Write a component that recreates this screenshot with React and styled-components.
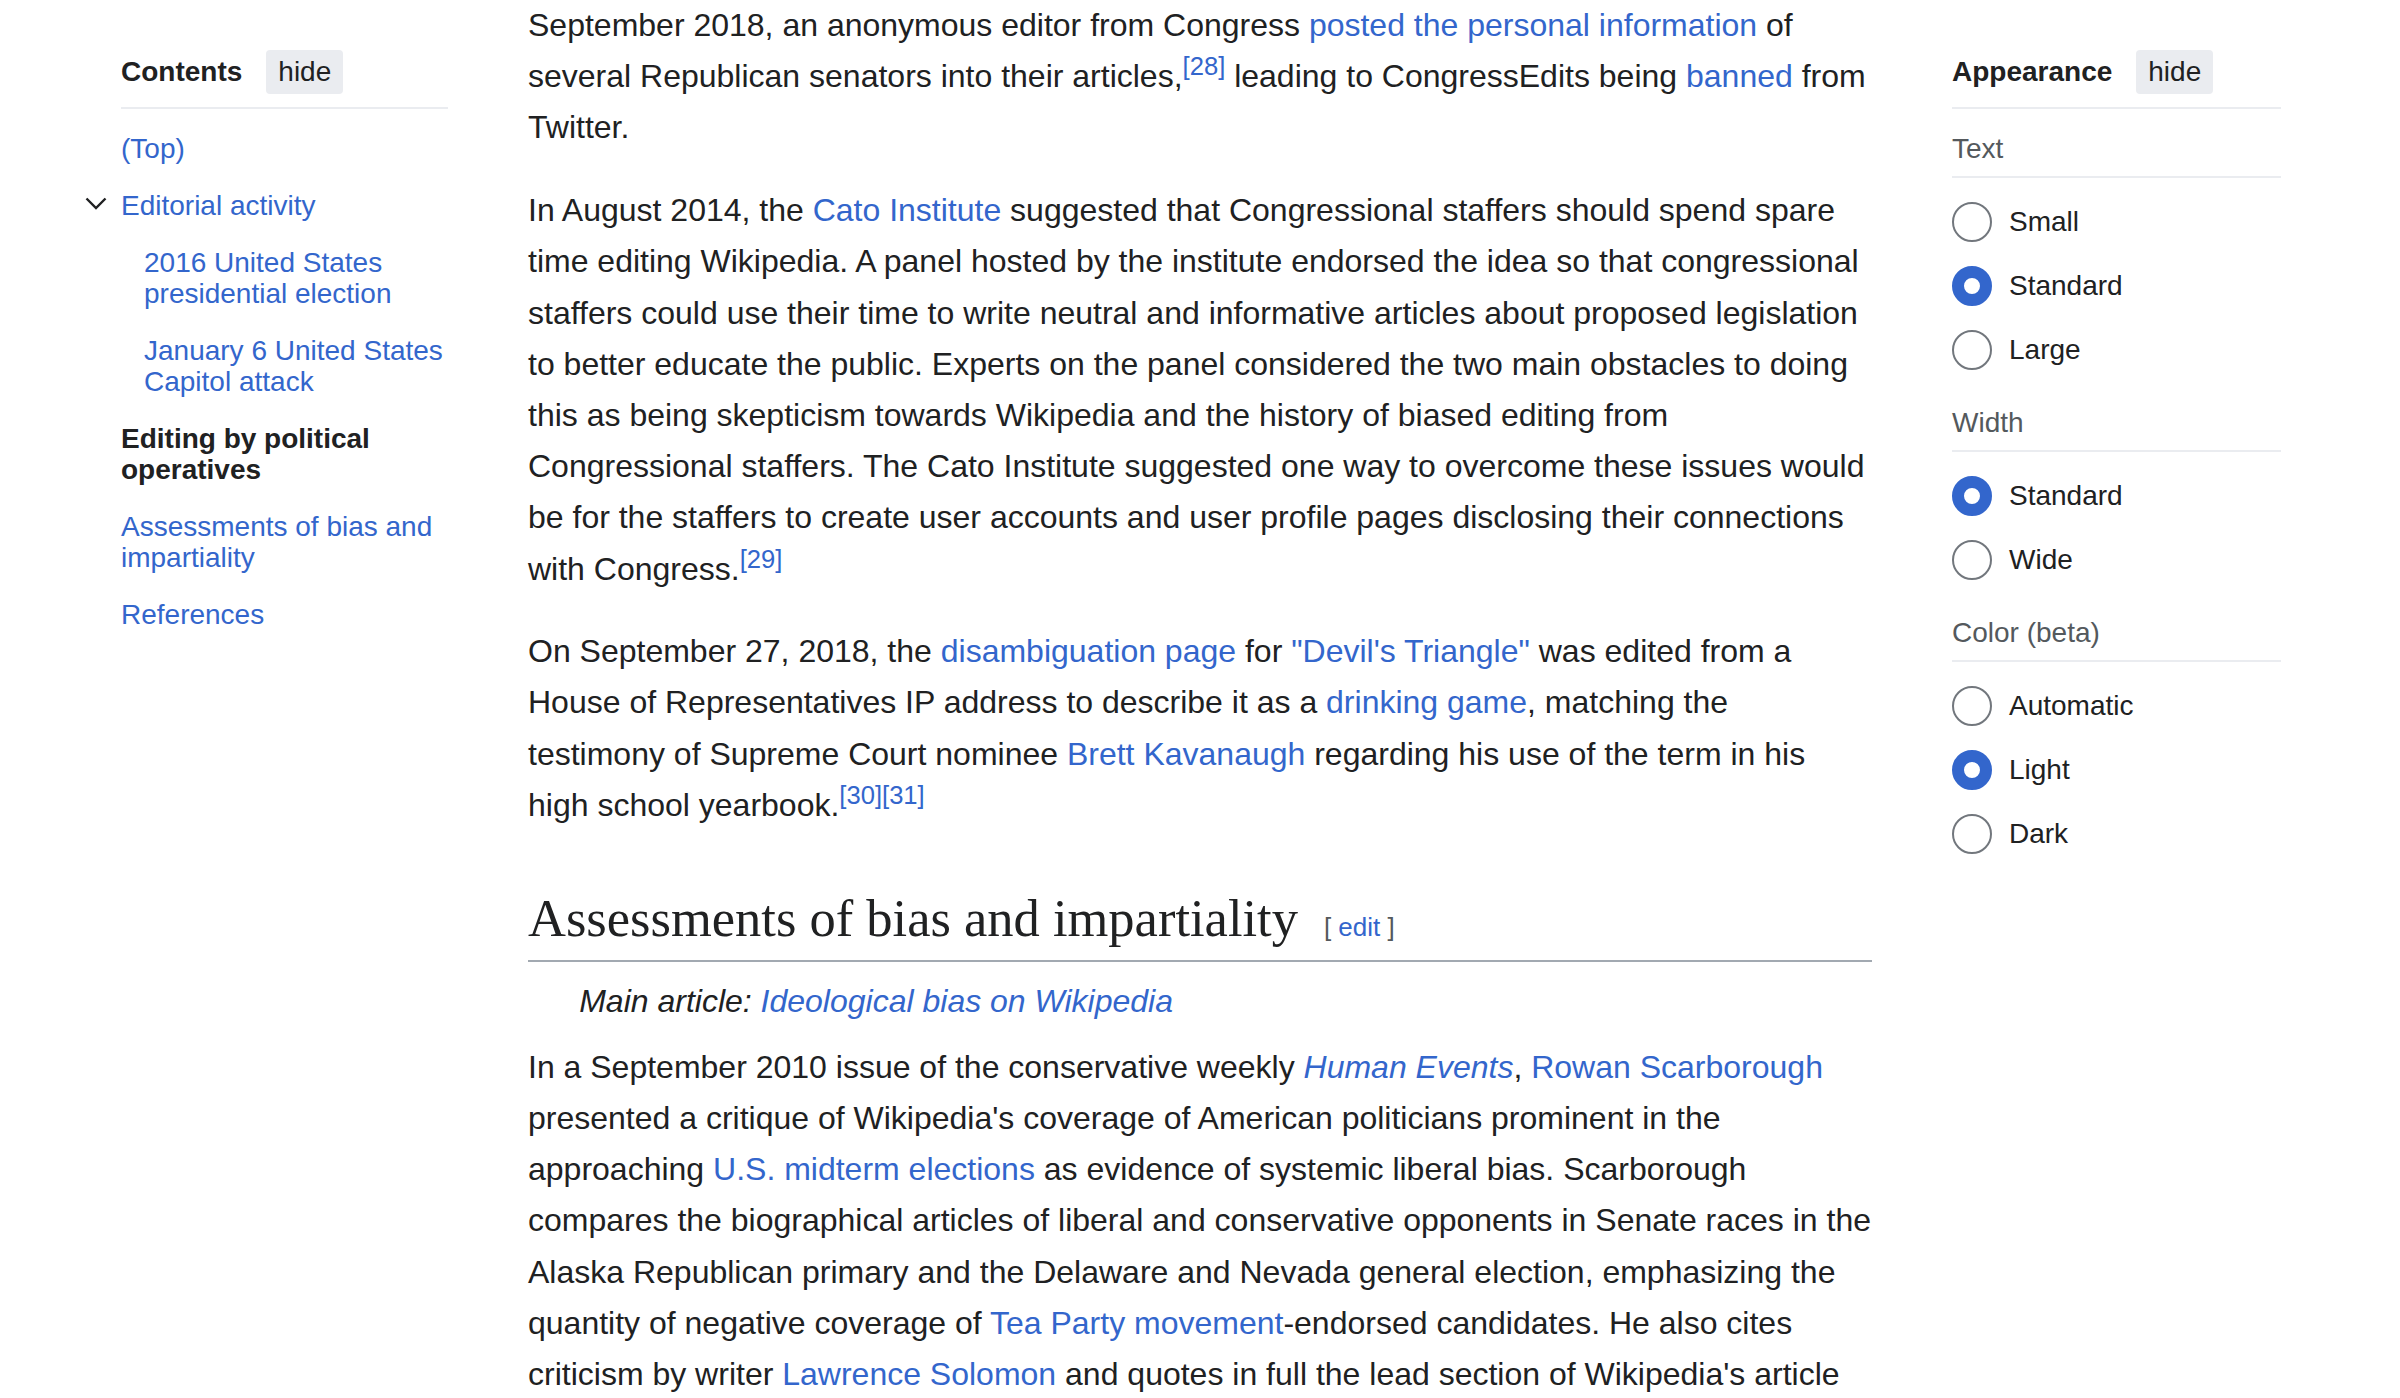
import styled, { createGlobalStyle } from 'styled-components'

const GlobalStyle = createGlobalStyle`
  html, body {
    margin: 0;
    padding: 0;
    background: #ffffff;
    overflow: hidden;
  }
  body {
    font-family: "Liberation Sans", Arial, Helvetica, sans-serif;
    color: #202122;
  }
`

// Layout
const Page = styled.div`
  display: grid;
  grid-template-columns: 327px 1344px 329px;
  column-gap: 80px;
  align-items: start;
  padding-left: 121px;
  height: 1398px;
  overflow: hidden;
`

const Sidebar = styled.aside`
  display: flex;
  flex-direction: column;
`

const PanelHeader = styled.div`
  display: flex;
  align-items: center;
  gap: 24px;
  margin-top: 50px;
  height: 44px;
  padding-bottom: 13px;
  border-bottom: 2px solid #eaecf0;
`

const PanelTitle = styled.h2`
  margin: 0;
  font-size: 28px;
  font-weight: bold;
  line-height: 44px;
  color: #202122;
`

const HideButton = styled.button`
  font-family: inherit;
  font-size: 28px;
  color: #202122;
  background: #eaecf0;
  border: none;
  border-radius: 4px;
  height: 44px;
  padding: 0 12px;
`

// Table of contents
const TocList = styled.ul`
  list-style: none;
  margin: ${p => (p.$nested ? '26px 0 0' : '23.5px 0 0')};
  padding: 0 0 0 ${p => (p.$nested ? '23px' : '0')};
  display: flex;
  flex-direction: column;
  gap: 26px;
`

const TocItem = styled.li`
  position: relative;
  font-size: 28px;
  line-height: 31px;
`

const TocLink = styled.a`
  color: ${p => (p.$active ? '#202122' : '#3366cc')};
  font-weight: ${p => (p.$active ? 'bold' : 'normal')};
  text-decoration: none;
`

const Toggle = styled.span`
  position: absolute;
  left: -36px;
  top: 7px;
  width: 22px;
  height: 13px;
  display: flex;

  svg {
    width: 22px;
    height: 13px;
  }
`

// Article
const Article = styled.main`
  font-size: 32px;
  line-height: 51.2px;
  color: #202122;
`

const Para = styled.p`
  margin: 0 0 31.5px;
`

const A = styled.a`
  color: #3366cc;
  text-decoration: none;
  font-style: ${p => (p.$italic ? 'italic' : 'inherit')};
`

const Ref = styled.sup`
  font-size: 80%;
  line-height: 1;
  vertical-align: super;
  white-space: nowrap;
`

// margin-top collapses with the paragraph's bottom margin
const HeadingRow = styled.div`
  display: flex;
  align-items: baseline;
  margin-top: 50.5px;
  padding-bottom: 6px;
  border-bottom: 2px solid #a2a9b1;
`

const Heading = styled.h2`
  margin: 0;
  font-family: "Liberation Serif", "Times New Roman", serif;
  font-size: 52.5px;
  font-weight: normal;
  line-height: 72px;
  color: #202122;
`

const EditSection = styled.span`
  margin-left: 26px;
  font-size: 26px;
  line-height: 1;
  color: #54595d;
`

const Hatnote = styled.div`
  margin: 14px 0 15px;
  padding-left: 51.2px;
  font-style: italic;
`

// Appearance panel
const Section = styled.div`
  padding-top: 23.5px;
`

const SectionLabel = styled.div`
  font-size: 28px;
  line-height: 31px;
  color: #54595d;
  padding-bottom: 12px;
  border-bottom: 2px solid #eaecf0;
`

const RadioGroup = styled.div`
  display: flex;
  flex-direction: column;
  gap: 24px;
  padding: 24.5px 0 13px;
`

const RadioRow = styled.label`
  display: flex;
  align-items: center;
  gap: 17px;
  height: 40px;
  font-size: 28px;
  color: #202122;
`

const RadioInput = styled.input`
  appearance: none;
  margin: 0;
  width: 40px;
  height: 40px;
  box-sizing: border-box;
  border-radius: 50%;
  border: 2px solid #72777d;
  background: #ffffff;
  flex: none;

  &:checked {
    border: 12px solid #3366cc;
  }
`

const appearance = [
  { name: 'text', label: 'Text', options: ['Small', 'Standard', 'Large'], value: 'Standard' },
  { name: 'width', label: 'Width', options: ['Standard', 'Wide'], value: 'Standard' },
  { name: 'color', label: 'Color (beta)', options: ['Automatic', 'Light', 'Dark'], value: 'Light' },
]

function Contents() {
  return (
    <Sidebar>
      <PanelHeader>
        <PanelTitle>Contents</PanelTitle>
        <HideButton>hide</HideButton>
      </PanelHeader>
      <TocList>
        <TocItem><TocLink href="#">(Top)</TocLink></TocItem>
        <TocItem>
          <Toggle>
            <svg viewBox="0 0 22 13" fill="none">
              <polyline points="1.5,1.5 11,11 20.5,1.5" stroke="#202122" strokeWidth="2.4" />
            </svg>
          </Toggle>
          <TocLink href="#">Editorial activity</TocLink>
          <TocList $nested>
            <TocItem><TocLink href="#">2016 United States presidential election</TocLink></TocItem>
            <TocItem><TocLink href="#">January 6 United States Capitol attack</TocLink></TocItem>
          </TocList>
        </TocItem>
        <TocItem><TocLink href="#" $active>Editing by political operatives</TocLink></TocItem>
        <TocItem><TocLink href="#">Assessments of bias and impartiality</TocLink></TocItem>
        <TocItem><TocLink href="#">References</TocLink></TocItem>
      </TocList>
    </Sidebar>
  )
}

function Appearance() {
  return (
    <Sidebar>
      <PanelHeader>
        <PanelTitle>Appearance</PanelTitle>
        <HideButton>hide</HideButton>
      </PanelHeader>
      {appearance.map(group => (
        <Section key={group.name}>
          <SectionLabel>{group.label}</SectionLabel>
          <RadioGroup>
            {group.options.map(opt => (
              <RadioRow key={opt}>
                <RadioInput type="radio" name={group.name} defaultChecked={opt === group.value} />
                {opt}
              </RadioRow>
            ))}
          </RadioGroup>
        </Section>
      ))}
    </Sidebar>
  )
}

export default function App() {
  return (
    <>
      <GlobalStyle />
      <Page>
        <Contents />
        <Article>
          <Para>
            September 2018, an anonymous editor from Congress <A href="#">posted the personal information</A> of
            several Republican senators into their articles,<Ref><A href="#">[28]</A></Ref> leading to CongressEdits
            being <A href="#">banned</A> from Twitter.
          </Para>
          <Para>
            In August 2014, the <A href="#">Cato Institute</A> suggested that Congressional staffers should spend
            spare time editing Wikipedia. A panel hosted by the institute endorsed the idea so that congressional
            staffers could use their time to write neutral and informative articles about proposed legislation to
            better educate the public. Experts on the panel considered the two main obstacles to doing this as being
            skepticism towards Wikipedia and the history of biased editing from Congressional staffers. The Cato
            Institute suggested one way to overcome these issues would be for the staffers to create user accounts
            and user profile pages disclosing their connections with Congress.<Ref><A href="#">[29]</A></Ref>
          </Para>
          <Para>
            On September 27, 2018, the <A href="#">disambiguation page</A> for <A href="#">"Devil's Triangle"</A> was
            edited from a House of Representatives IP address to describe it as a <A href="#">drinking game</A>,
            matching the testimony of Supreme Court nominee <A href="#">Brett Kavanaugh</A> regarding his use of the
            term in his high school yearbook.<Ref><A href="#">[30]</A><A href="#">[31]</A></Ref>
          </Para>
          <HeadingRow>
            <Heading>Assessments of bias and impartiality</Heading>
            <EditSection>[ <A href="#">edit</A> ]</EditSection>
          </HeadingRow>
          <Hatnote>
            Main article: <A href="#">Ideological bias on Wikipedia</A>
          </Hatnote>
          <Para>
            In a September 2010 issue of the conservative weekly <A href="#" $italic>Human Events</A>,{' '}
            <A href="#">Rowan Scarborough</A> presented a critique of Wikipedia's coverage of American politicians
            prominent in the approaching <A href="#">U.S. midterm elections</A> as evidence of systemic liberal bias.
            Scarborough compares the biographical articles of liberal and conservative opponents in Senate races in
            the Alaska Republican primary and the Delaware and Nevada general election, emphasizing the quantity of
            negative coverage of <A href="#">Tea Party movement</A>-endorsed candidates. He also cites criticism by
            writer <A href="#">Lawrence Solomon</A> and quotes in full the lead section of Wikipedia's article
          </Para>
        </Article>
        <Appearance />
      </Page>
    </>
  )
}
